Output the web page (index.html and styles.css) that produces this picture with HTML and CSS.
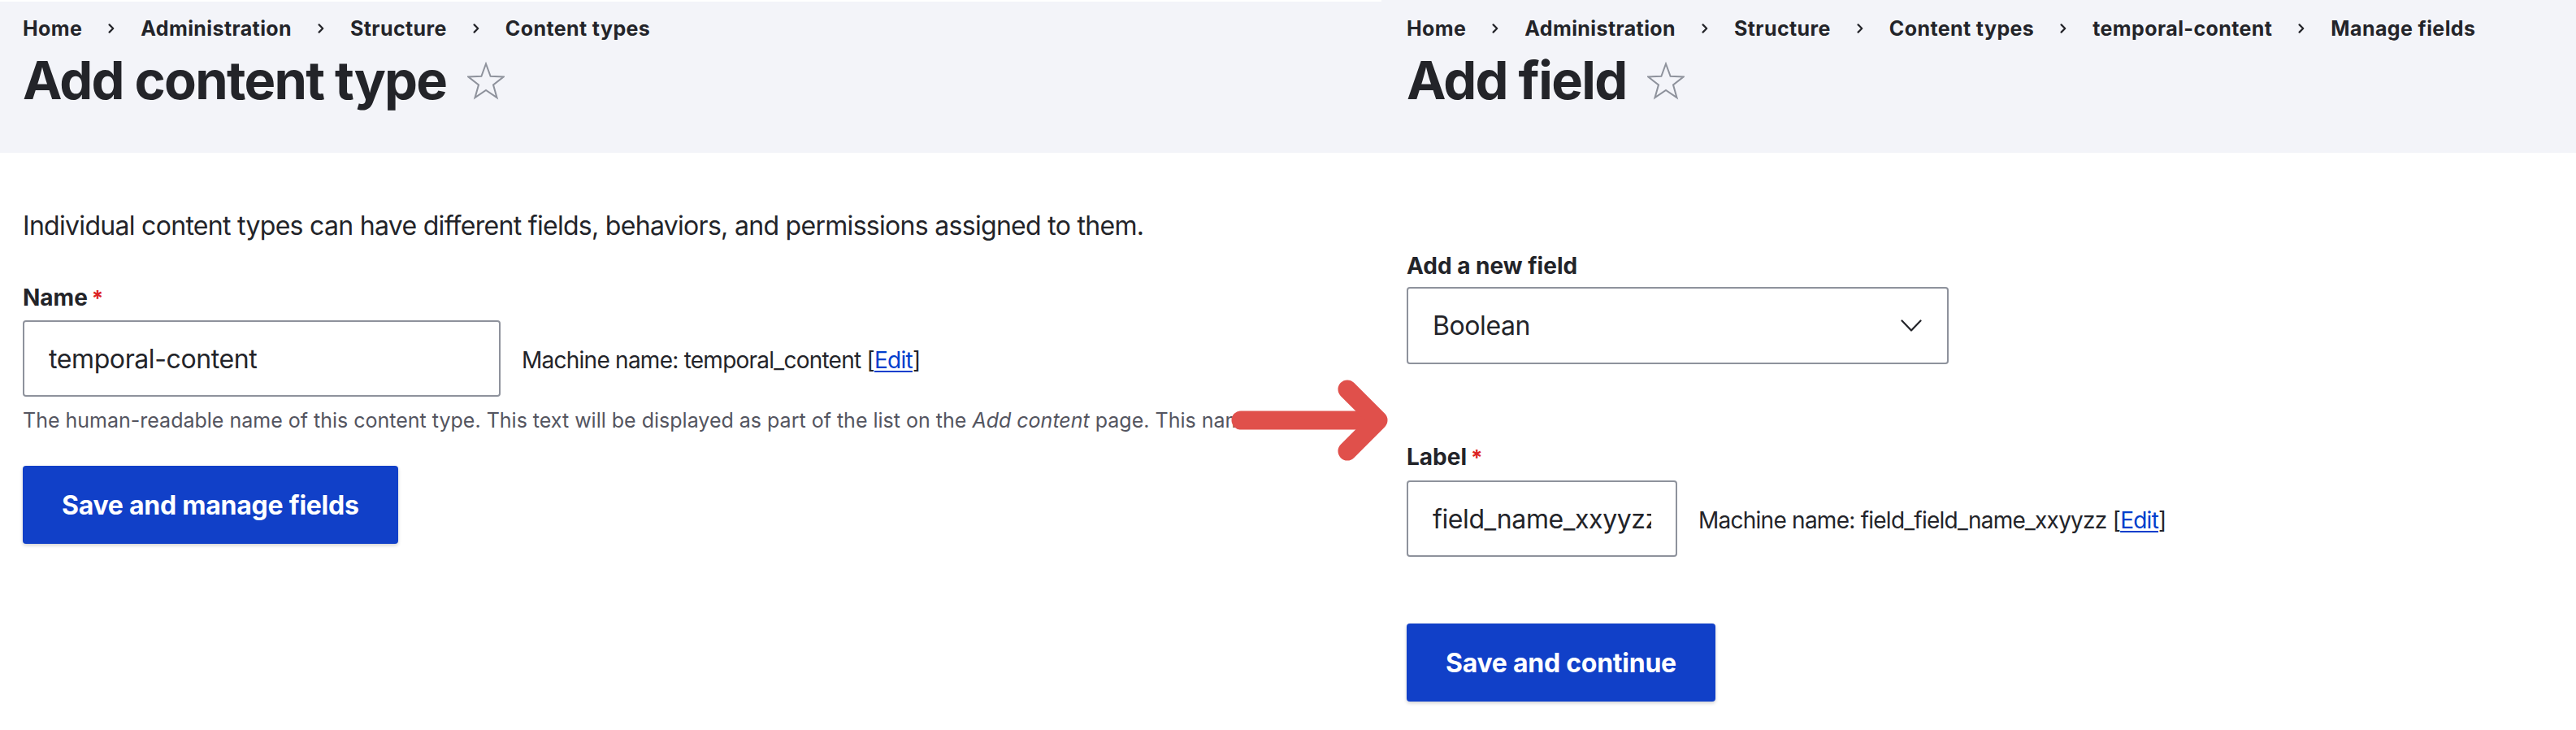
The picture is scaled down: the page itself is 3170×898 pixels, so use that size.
FILE: index.html
```html
<!DOCTYPE html>
<html lang="en">
<head>
<meta charset="utf-8">
<title>Add content type / Add field</title>
<link rel="stylesheet" href="styles.css">
</head>
<body>
<div class="page">
  <section class="panel panel--left">
    <header class="page-header">
      <nav class="breadcrumb">
        <ol>
          <li>Home</li>
          <li><span class="sep"><svg width="8" height="12" viewBox="0 0 8 12"><path d="M1.6 1.4 L6.2 6 L1.6 10.6" fill="none" stroke="currentColor" stroke-width="2.2" stroke-linecap="round" stroke-linejoin="round"/></svg></span>Administration</li>
          <li><span class="sep"><svg width="8" height="12" viewBox="0 0 8 12"><path d="M1.6 1.4 L6.2 6 L1.6 10.6" fill="none" stroke="currentColor" stroke-width="2.2" stroke-linecap="round" stroke-linejoin="round"/></svg></span>Structure</li>
          <li><span class="sep"><svg width="8" height="12" viewBox="0 0 8 12"><path d="M1.6 1.4 L6.2 6 L1.6 10.6" fill="none" stroke="currentColor" stroke-width="2.2" stroke-linecap="round" stroke-linejoin="round"/></svg></span>Content types</li>
        </ol>
      </nav>
      <div class="title-row">
        <h1 class="page-title">Add content type</h1>
        <svg class="star" width="46" height="47" viewBox="0 0 46 47"><path d="M23 2.5 L28.6 17.8 L44.9 18.4 L32 28.4 L36.5 44.1 L23 35 L9.5 44.1 L14 28.4 L1.1 18.4 L17.4 17.8 Z" fill="none" stroke="#8e929c" stroke-width="2" stroke-linejoin="miter"/></svg>
      </div>
    </header>
    <main class="content content--left">
      <p class="intro">Individual content types can have different fields, behaviors, and permissions assigned to them.</p>
      <div class="form-item form-item--name">
        <label class="form-label" for="name">Name<span class="req">*</span></label>
        <div class="field-row">
          <input class="text-input text-input--name" id="name" type="text" value="temporal-content" readonly>
          <span class="machine">Machine name: temporal_content [<a href="#">Edit</a>]</span>
        </div>
        <div class="description">The human-readable name of this content type. This text will be displayed as part of the list on the <em>Add content</em> page. This name must be unique.</div>
      </div>
      <button class="button button--left" type="button">Save and manage fields</button>
    </main>
  </section>

  <section class="panel panel--right">
    <header class="page-header">
      <nav class="breadcrumb">
        <ol>
          <li>Home</li>
          <li><span class="sep"><svg width="8" height="12" viewBox="0 0 8 12"><path d="M1.6 1.4 L6.2 6 L1.6 10.6" fill="none" stroke="currentColor" stroke-width="2.2" stroke-linecap="round" stroke-linejoin="round"/></svg></span>Administration</li>
          <li><span class="sep"><svg width="8" height="12" viewBox="0 0 8 12"><path d="M1.6 1.4 L6.2 6 L1.6 10.6" fill="none" stroke="currentColor" stroke-width="2.2" stroke-linecap="round" stroke-linejoin="round"/></svg></span>Structure</li>
          <li><span class="sep"><svg width="8" height="12" viewBox="0 0 8 12"><path d="M1.6 1.4 L6.2 6 L1.6 10.6" fill="none" stroke="currentColor" stroke-width="2.2" stroke-linecap="round" stroke-linejoin="round"/></svg></span>Content types</li>
          <li><span class="sep"><svg width="8" height="12" viewBox="0 0 8 12"><path d="M1.6 1.4 L6.2 6 L1.6 10.6" fill="none" stroke="currentColor" stroke-width="2.2" stroke-linecap="round" stroke-linejoin="round"/></svg></span>temporal-content</li>
          <li><span class="sep"><svg width="8" height="12" viewBox="0 0 8 12"><path d="M1.6 1.4 L6.2 6 L1.6 10.6" fill="none" stroke="currentColor" stroke-width="2.2" stroke-linecap="round" stroke-linejoin="round"/></svg></span>Manage fields</li>
        </ol>
      </nav>
      <div class="title-row">
        <h1 class="page-title">Add field</h1>
        <svg class="star" width="46" height="47" viewBox="0 0 46 47"><path d="M23 2.5 L28.6 17.8 L44.9 18.4 L32 28.4 L36.5 44.1 L23 35 L9.5 44.1 L14 28.4 L1.1 18.4 L17.4 17.8 Z" fill="none" stroke="#8e929c" stroke-width="2" stroke-linejoin="miter"/></svg>
      </div>
    </header>
    <main class="content content--right">
      <div class="form-item">
        <label class="form-label" for="newfield">Add a new field</label>
        <div class="select-wrap">
          <select class="select" id="newfield">
            <option>Boolean</option>
          </select>
          <svg class="select-chevron" width="26" height="16" viewBox="0 0 26 16"><path d="M1.5 1.5 L13 13.5 L24.5 1.5" fill="none" stroke="#232429" stroke-width="2.2" stroke-linecap="round" stroke-linejoin="round"/></svg>
        </div>
      </div>
      <div class="form-item form-item--label">
        <label class="form-label" for="label">Label<span class="req">*</span></label>
        <div class="field-row">
          <input class="text-input text-input--label" id="label" type="text" value="field_name_xxyyzz" readonly>
          <span class="machine">Machine name: field_field_name_xxyyzz [<a href="#">Edit</a>]</span>
        </div>
      </div>
      <button class="button button--right" type="button">Save and continue</button>
    </main>
  </section>

  <svg class="arrow" width="230" height="125" viewBox="0 0 230 125"><path d="M27 62 L192 62" fill="none" stroke="#e0504b" stroke-width="23" stroke-linecap="round"/><path d="M158 24 L196 62 L158 100" fill="none" stroke="#e0504b" stroke-width="23" stroke-linecap="round" stroke-linejoin="round"/></svg>
</div>
</body>
</html>
```

FILE: styles.css
```css
html, body {
  margin: 0;
  padding: 0;
  background: #ffffff;
}

body {
  font-family: Inter, "Noto Sans", "Liberation Sans", sans-serif;
  color: #232429;
}

.page {
  position: relative;
  display: flex;
  width: 3170px;
  height: 898px;
  overflow: hidden;
}

.panel {
  overflow: hidden;
  min-width: 0;
}

.panel--left {
  flex: 0 0 1700px;
}

.panel--right {
  flex: 1 1 auto;
}

/* Header */
.page-header {
  background: #f3f4f9;
  padding: 17px 0 49px 31px;
}

.panel--left .page-header {
  margin-top: 2px;
  padding-top: 15px;
  padding-left: 28px;
}

.breadcrumb ol {
  list-style: none;
  margin: 0;
  padding: 0;
  display: flex;
  align-items: center;
}

.breadcrumb li {
  display: flex;
  align-items: center;
  font-size: 25px;
  line-height: 36px;
  font-weight: 700;
  letter-spacing: 0.4px;
  white-space: nowrap;
  color: #232429;
}

.sep {
  display: flex;
  align-items: center;
  margin: 0 32px;
  color: #232429;
}

.title-row {
  display: flex;
  align-items: center;
  gap: 26px;
  margin-top: 6px;
}

.page-title {
  margin: 0;
  font-size: 65px;
  line-height: 80px;
  font-weight: 700;
  letter-spacing: -1.7px;
  color: #232429;
  white-space: nowrap;
}

.star {
  display: block;
  flex: none;
}

/* Content */
.content {
  display: flex;
  flex-direction: column;
  align-items: flex-start;
}

.content--left {
  padding: 66px 0 0 28px;
}

.content--right {
  padding: 121px 0 0 31px;
}

.intro {
  margin: 0 0 46px;
  font-size: 32px;
  line-height: 48px;
  letter-spacing: -0.7px;
  white-space: nowrap;
}

.form-item {
  display: flex;
  flex-direction: column;
  align-items: flex-start;
}

.form-label {
  display: block;
  font-size: 28px;
  line-height: 36px;
  font-weight: 700;
  white-space: nowrap;
}

.req {
  color: #dc2323;
  margin-left: 5px;
  font-size: 26px;
}

.field-row {
  display: flex;
  align-items: baseline;
  gap: 26px;
  margin-top: 9px;
}

.form-item--label {
  margin-top: 96px;
}

.form-item--label .field-row {
  margin-top: 10px;
}

.text-input,
.select {
  box-sizing: border-box;
  height: 94px;
  border: 2px solid #8e929c;
  border-radius: 4px;
  padding: 0 30px;
  font-family: Inter, "Noto Sans", sans-serif;
  font-size: 32px;
  letter-spacing: -0.4px;
  color: #232429;
  background: #ffffff;
  outline: none;
}

.text-input--name {
  width: 588px;
}

.text-input--label {
  width: 333px;
}

.machine {
  font-size: 28px;
  line-height: 36px;
  letter-spacing: -0.75px;
  white-space: nowrap;
  color: #232429;
}

.machine a {
  color: #003ecc;
  text-decoration: underline;
  text-underline-offset: 3px;
}

.description {
  margin-top: 11px;
  width: 1497px;
  overflow: hidden;
  white-space: nowrap;
  font-size: 25px;
  line-height: 36px;
  color: #545560;
}

.select-wrap {
  position: relative;
  width: 667px;
  height: 95px;
  margin-top: 8px;
}

.select {
  width: 100%;
  height: 100%;
  appearance: none;
  -webkit-appearance: none;
}

.select-chevron {
  position: absolute;
  right: 33px;
  top: 40px;
  pointer-events: none;
}

.button {
  box-sizing: border-box;
  height: 96px;
  padding: 0 48px;
  border: 0;
  border-radius: 4px;
  background: #1140c8;
  color: #ffffff;
  font-family: Inter, "Noto Sans", sans-serif;
  font-size: 32px;
  font-weight: 700;
  letter-spacing: -0.25px;
  white-space: nowrap;
  box-shadow: 0 2px 4px rgba(0, 0, 0, 0.18);
}

.button--left {
  margin-top: 38px;
}

.button--right {
  margin-top: 82px;
}

.arrow {
  position: absolute;
  left: 1500px;
  top: 455px;
}
```
